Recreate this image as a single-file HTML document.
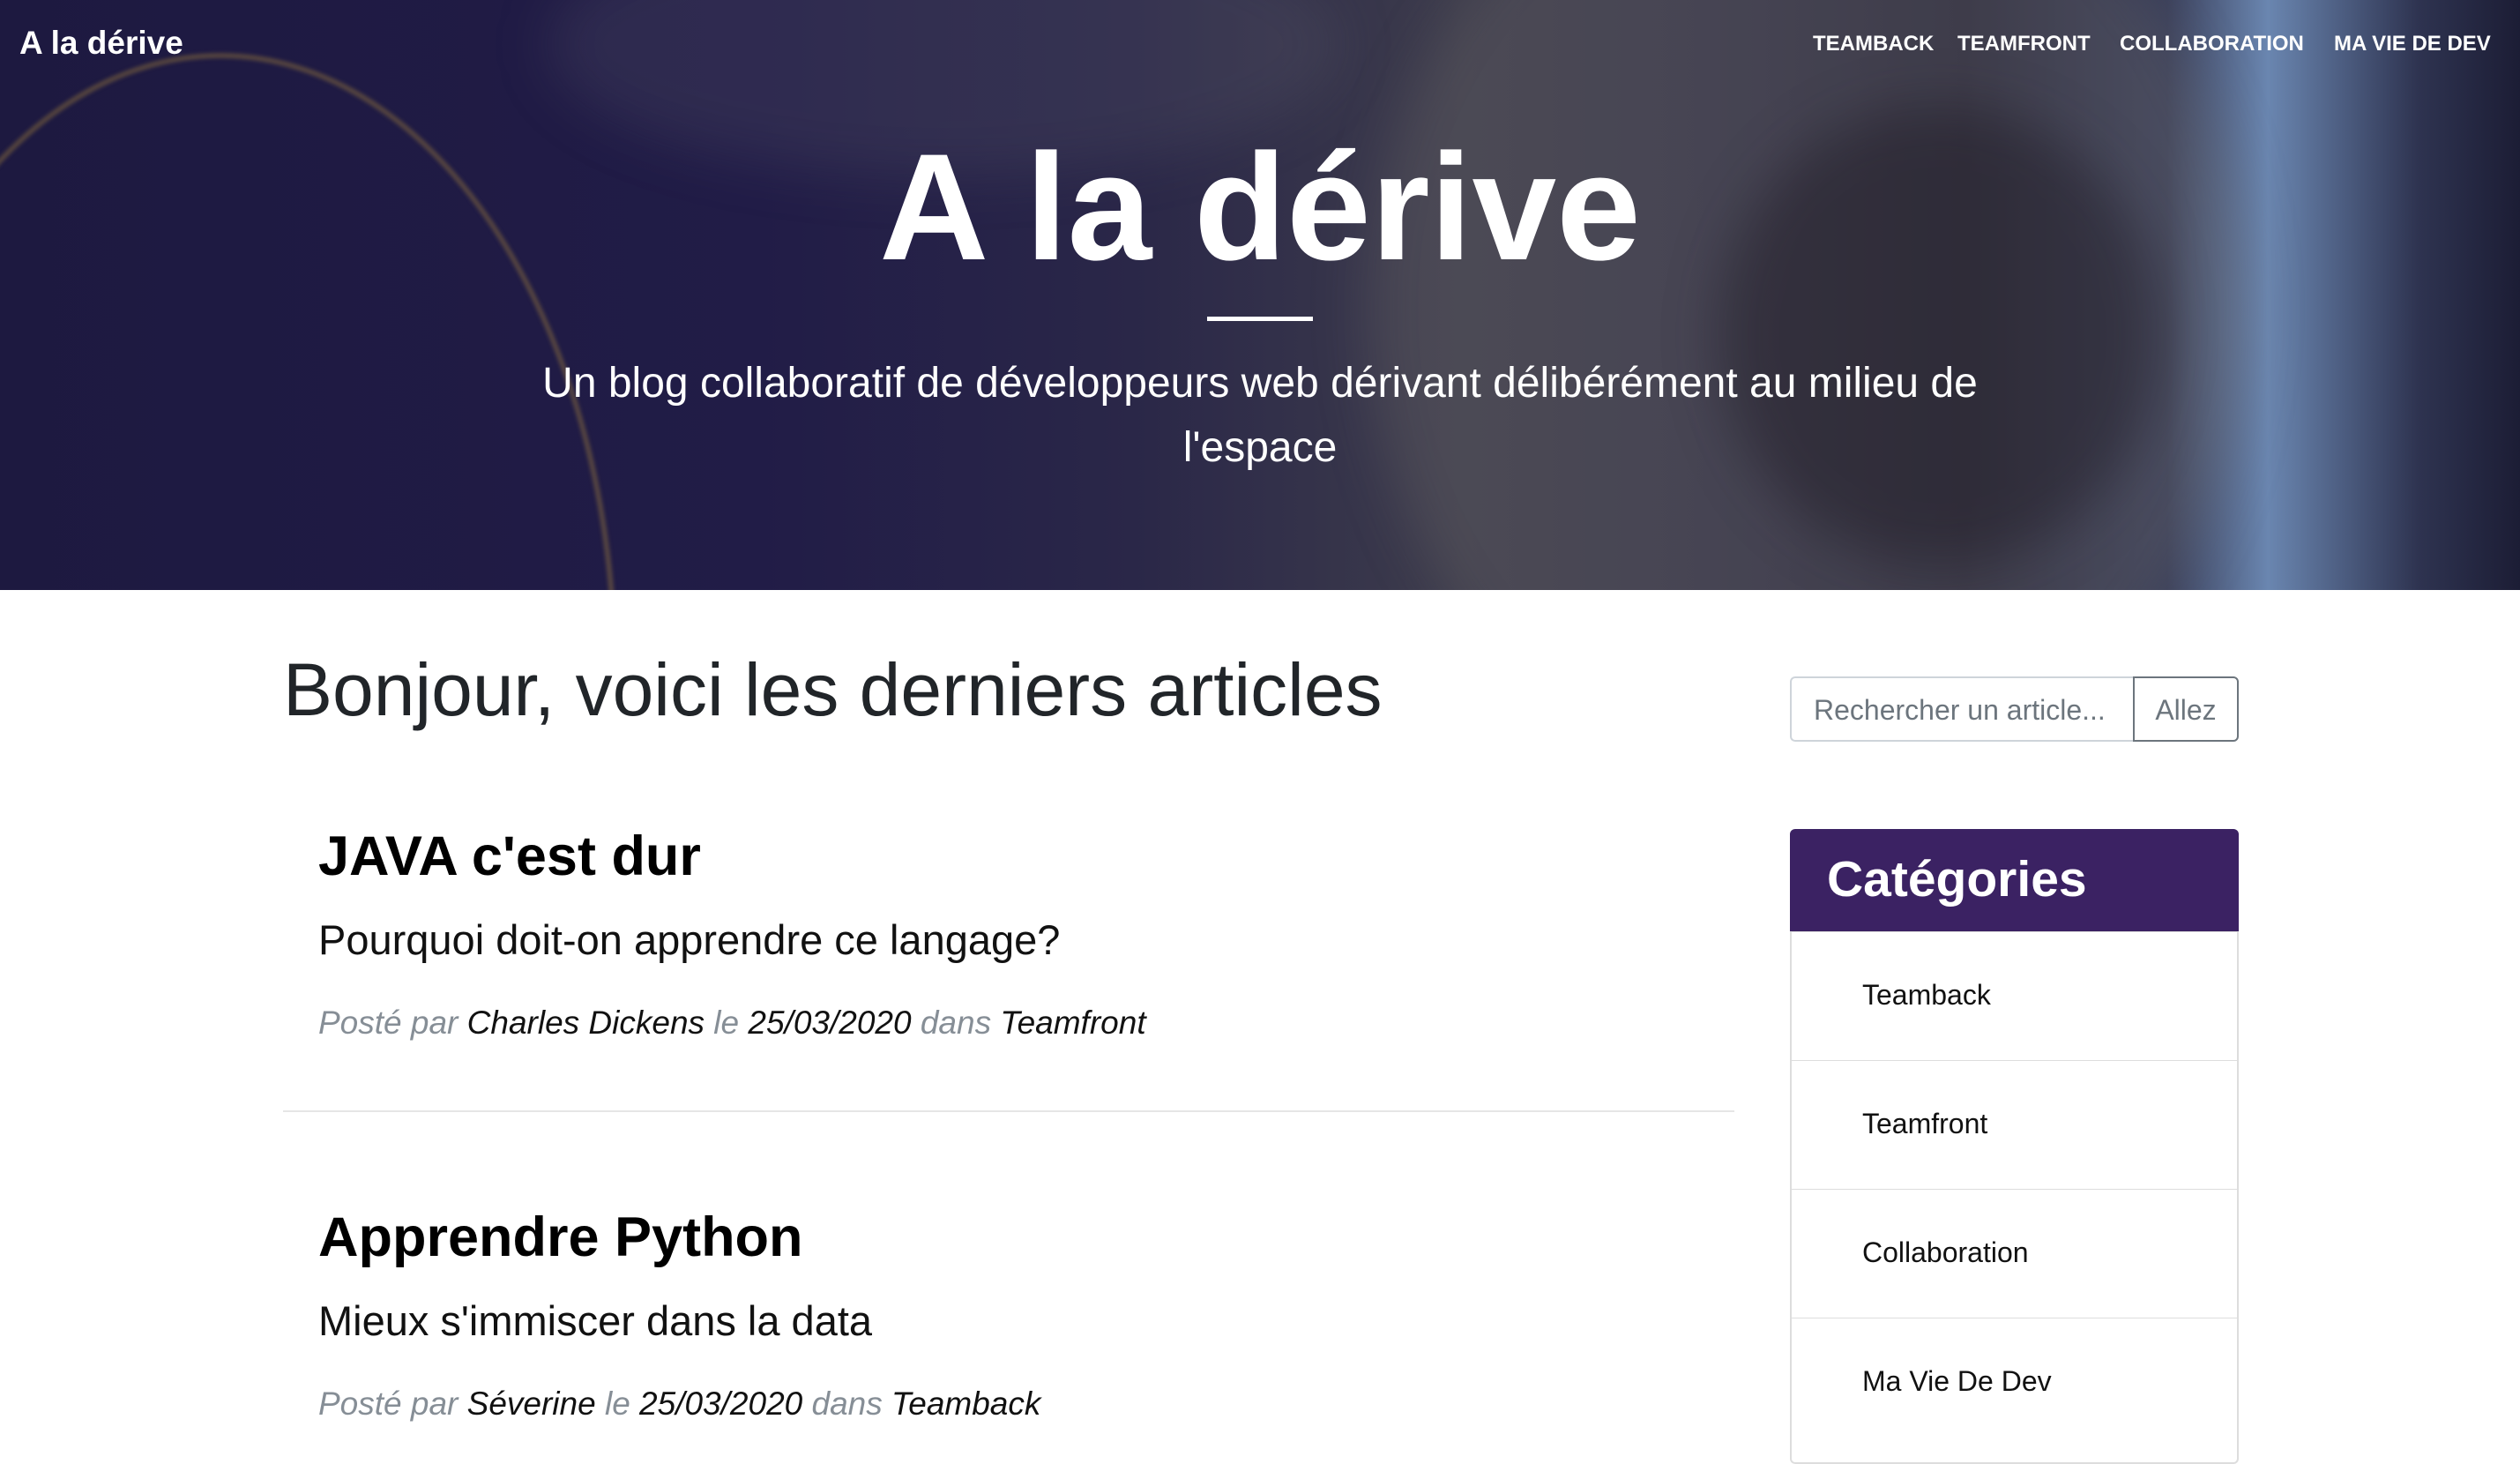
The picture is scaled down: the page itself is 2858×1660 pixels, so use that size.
<!DOCTYPE html>
<html><head><meta charset="utf-8"><style>
*{margin:0;padding:0;box-sizing:border-box}
body{width:2858px;height:1638px;overflow:hidden;background:#fff;font-family:"Liberation Sans",sans-serif;position:relative}
.hero{position:absolute;left:0;top:0;width:2858px;height:669px;overflow:hidden;
background:linear-gradient(90deg,#1d1940 0%,#211c47 30%,#2a2748 45%,#3d3c4c 58%,#36354a 68%,#2b2a3e 78%,#3a3f5a 86%,#6a86b0 90%,#2e3350 96%,#1c1d35 100%)}
.hero .s{position:absolute;border-radius:50%;filter:blur(30px)}
.a{position:absolute;white-space:nowrap}
.w{color:#fff}
.nav{font-weight:bold;font-size:24px;top:36px;color:#fff}
.meta{font-style:italic;font-size:37px;color:#868e96}
.meta b{font-weight:normal;color:#111}
.cat{position:absolute;left:2030px;width:509px;height:146px;border-top:1px solid #ddd;font-size:32px;color:#111;padding:53px 0 0 82px}
</style></head><body>
<div class="hero">
<div class="s" style="left:-200px;top:60px;width:900px;height:1400px;border:6px solid rgba(150,120,60,.45);filter:blur(2px)"></div>
<div class="s" style="left:1550px;top:-200px;width:1000px;height:1100px;background:rgba(120,115,110,.25)"></div>
<div class="s" style="left:1950px;top:120px;width:500px;height:520px;background:rgba(25,20,30,.4)"></div>
<div class="s" style="left:620px;top:-100px;width:900px;height:300px;background:rgba(110,110,120,.18)"></div>
</div>
<div class="a w" style="left:22px;top:28px;font-size:37px;font-weight:bold">A la dérive</div>
<div class="a nav" style="left:2056px">TEAMBACK</div>
<div class="a nav" style="left:2220px">TEAMFRONT</div>
<div class="a nav" style="left:2404px">COLLABORATION</div>
<div class="a nav" style="left:2647px">MA VIE DE DEV</div>
<div class="a w" style="left:0;width:2858px;text-align:center;top:140px;font-size:172px;font-weight:bold;line-height:190px">A la dérive</div>
<div class="a" style="left:1369px;top:359px;width:120px;height:5px;background:#fff"></div>
<div class="a w" style="left:0;width:2858px;text-align:center;top:398px;font-size:48px;line-height:73px;white-space:normal">Un blog collaboratif de développeurs web dérivant délibérément au milieu de<br>l'espace</div>

<div class="a" style="left:321px;top:732px;font-size:84px;color:#212529;line-height:100px">Bonjour, voici les derniers articles</div>

<div class="a" style="left:361px;top:933px;font-size:63px;font-weight:bold;color:#000;line-height:76px">JAVA c'est dur</div>
<div class="a" style="left:361px;top:1038px;font-size:47px;color:#111;line-height:56px">Pourquoi doit-on apprendre ce langage?</div>
<div class="a meta" style="left:361px;top:1139px">Posté par <b>Charles Dickens</b> le <b>25/03/2020</b> dans <b>Teamfront</b></div>
<div class="a" style="left:321px;top:1259px;width:1646px;height:2px;background:#e6e6e6"></div>
<div class="a" style="left:361px;top:1365px;font-size:63px;font-weight:bold;color:#000;line-height:76px">Apprendre Python</div>
<div class="a" style="left:361px;top:1470px;font-size:47px;color:#111;line-height:56px">Mieux s'immiscer dans la data</div>
<div class="a meta" style="left:361px;top:1571px">Posté par <b>Séverine</b> le <b>25/03/2020</b> dans <b>Teamback</b></div>

<div class="a" style="left:2030px;top:767px;width:391px;height:74px;border:2px solid #ced4da;border-right:none;border-radius:6px 0 0 6px;font-size:32px;color:#6c757d;padding:18px 0 0 25px;overflow:hidden">Rechercher un article...</div>
<div class="a" style="left:2419px;top:767px;width:120px;height:74px;border:2px solid #6c757d;border-radius:0 6px 6px 0;font-size:32px;color:#6c757d;text-align:center;padding-top:18px">Allez</div>

<div class="a" style="left:2030px;top:940px;width:509px;height:720px;border:2px solid #ddd;border-radius:6px"></div>
<div class="a" style="left:2030px;top:940px;width:509px;height:116px;background:#3b2263;border-radius:6px 6px 0 0;color:#fff;font-size:57px;font-weight:bold;padding:24px 0 0 42px">Catégories</div>
<div class="cat" style="top:1056px">Teamback</div>
<div class="cat" style="top:1202px">Teamfront</div>
<div class="cat" style="top:1348px">Collaboration</div>
<div class="cat" style="top:1494px">Ma Vie De Dev</div>
</body></html>
